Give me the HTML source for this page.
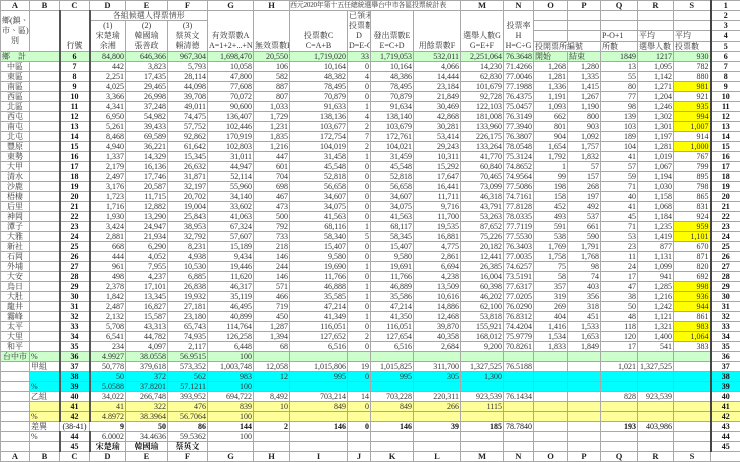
<!DOCTYPE html>
<html><head><meta charset="utf-8"><style>
body{margin:0;background:#fff;width:740px;height:459px;overflow:hidden}
table{border-collapse:collapse;table-layout:fixed;width:740px;font-family:"Liberation Serif","Noto Serif CJK TC","Noto Serif CJK SC",serif;font-size:8px;color:#333}
td{border:1px solid #a8a8a8;height:9px;line-height:9px;padding:0 1px;text-align:right;white-space:nowrap;overflow:hidden}
tr{height:10px}
.l{text-align:center;font-weight:bold;font-size:8.5px;color:#222}
.c{text-align:center}
.lt{text-align:left}
.rc{text-align:center;font-weight:bold;border-left:2px solid #444;border-right:1px solid #444;color:#111}
.cc{text-align:center;font-weight:bold;border-left:2px solid #555;border-right:2px solid #555;color:#111}
.h{vertical-align:bottom;text-align:center;line-height:10px;border-top:none;border-bottom:none}
.g td{background:#ccffcc}
.cy td{background:#00ffff}
.yl td{background:#ffff99}
td.y{background:#ffff00}
td.w{background:#fff}
.b{font-weight:bold;color:#111}
.t{text-align:left;font-size:7px;letter-spacing:-0.2px;padding:0;overflow:visible}
</style></head><body>
<table>
<colgroup><col style="width:29px"><col style="width:30px"><col style="width:30px"><col style="width:36px"><col style="width:42px"><col style="width:40px"><col style="width:46px"><col style="width:36px"><col style="width:58px"><col style="width:23px"><col style="width:43px"><col style="width:47px"><col style="width:43px"><col style="width:30px"><col style="width:34px"><col style="width:33px"><col style="width:37px"><col style="width:36px"><col style="width:37px"><col style="width:30px"></colgroup>
<tr><td class="l">A</td><td class="l">B</td><td class="l">C</td><td class="l">D</td><td class="l">E</td><td class="l">F</td><td class="l">G</td><td class="l">H</td><td colspan="4" class="t">西元2020年第十五任總統選舉台中市各區投票統計表</td><td class="l">M</td><td class="l">N</td><td class="l">O</td><td class="l">P</td><td class="l">Q</td><td class="l">R</td><td class="l">S</td><td class="rc">1</td></tr>
<tr><td rowspan="4" class="h" style="vertical-align:middle">鄉(鎮、<br>市、區)<br>別</td><td rowspan="4" class="h"></td><td rowspan="4" class="h cc" style="font-weight:normal">行號</td><td colspan="3" class="c">各組候選人得票情形</td><td rowspan="4" class="h">有效票數A<br>A=1+2+...+N</td><td rowspan="4" class="h">無效票數B</td><td rowspan="4" class="h">投票數C<br>C=A+B</td><td rowspan="4" class="h">已領未<br>投票數<br>D<br>D=E-C</td><td rowspan="4" class="h">發出票數E<br>E=C+D</td><td rowspan="4" class="h">用餘票數F</td><td rowspan="4" class="h">選舉人數G<br>G=E+F</td><td rowspan="4" class="h">投票率<br>H<br>H=C÷G</td><td></td><td></td><td></td><td></td><td></td><td class="rc">2</td></tr>
<tr><td rowspan="3" class="h">(1)<br>宋楚瑜<br>余湘</td><td rowspan="3" class="h">(2)<br>韓國瑜<br>張善政</td><td rowspan="3" class="h">(3)<br>蔡英文<br>賴清德</td><td></td><td></td><td></td><td></td><td></td><td class="rc">3</td></tr>
<tr><td></td><td></td><td class="lt">P-O+1</td><td class="lt">平均</td><td class="lt">平均</td><td class="rc">4</td></tr>
<tr><td colspan="2" class="lt">投開票所編號</td><td class="lt">所數</td><td class="lt">選舉人數</td><td class="lt">投票數</td><td class="rc">5</td></tr>
<tr class="g"><td colspan="2" class="lt">鄉　計</td><td class="cc">6</td><td>84,800</td><td>646,366</td><td>967,304</td><td>1,698,470</td><td>20,550</td><td>1,719,020</td><td>33</td><td>1,719,053</td><td>532,011</td><td>2,251,064</td><td>76.3648</td><td class="lt">開始</td><td class="lt">結束</td><td>1849</td><td>1217</td><td>930</td><td class="rc w">6</td></tr>
<tr><td class="c">中區</td><td></td><td class="cc">7</td><td>442</td><td>3,823</td><td>5,793</td><td>10,058</td><td>106</td><td>10,164</td><td>0</td><td>10,164</td><td>4,066</td><td>14,230</td><td>71.4266</td><td>1,268</td><td>1,280</td><td>13</td><td>1,095</td><td>782</td><td class="rc">7</td></tr>
<tr><td class="c">東區</td><td></td><td class="cc">8</td><td>2,251</td><td>17,435</td><td>28,114</td><td>47,800</td><td>582</td><td>48,382</td><td>4</td><td>48,386</td><td>14,444</td><td>62,830</td><td>77.0046</td><td>1,281</td><td>1,335</td><td>55</td><td>1,142</td><td>880</td><td class="rc">8</td></tr>
<tr><td class="c">南區</td><td></td><td class="cc">9</td><td>4,025</td><td>29,465</td><td>44,098</td><td>77,608</td><td>887</td><td>78,495</td><td>0</td><td>78,495</td><td>23,184</td><td>101,679</td><td>77.1988</td><td>1,336</td><td>1,415</td><td>80</td><td>1,271</td><td class="y">981</td><td class="rc">9</td></tr>
<tr><td class="c">西區</td><td></td><td class="cc">10</td><td>3,366</td><td>26,998</td><td>39,708</td><td>70,072</td><td>807</td><td>70,879</td><td>0</td><td>70,879</td><td>21,849</td><td>92,728</td><td>76.4375</td><td>1,191</td><td>1,267</td><td>77</td><td>1,204</td><td>921</td><td class="rc">10</td></tr>
<tr><td class="c">北區</td><td></td><td class="cc">11</td><td>4,341</td><td>37,248</td><td>49,011</td><td>90,600</td><td>1,033</td><td>91,633</td><td>1</td><td>91,634</td><td>30,469</td><td>122,103</td><td>75.0457</td><td>1,093</td><td>1,190</td><td>98</td><td>1,246</td><td class="y">935</td><td class="rc">11</td></tr>
<tr><td class="c">西屯</td><td></td><td class="cc">12</td><td>6,950</td><td>54,982</td><td>74,475</td><td>136,407</td><td>1,729</td><td>138,136</td><td>4</td><td>138,140</td><td>42,868</td><td>181,008</td><td>76.3149</td><td>662</td><td>800</td><td>139</td><td>1,302</td><td class="y">994</td><td class="rc">12</td></tr>
<tr><td class="c">南屯</td><td></td><td class="cc">13</td><td>5,261</td><td>39,433</td><td>57,752</td><td>102,446</td><td>1,231</td><td>103,677</td><td>2</td><td>103,679</td><td>30,281</td><td>133,960</td><td>77.3940</td><td>801</td><td>903</td><td>103</td><td>1,301</td><td class="y">1,007</td><td class="rc">13</td></tr>
<tr><td class="c">北屯</td><td></td><td class="cc">14</td><td>8,468</td><td>69,589</td><td>92,862</td><td>170,919</td><td>1,835</td><td>172,754</td><td>7</td><td>172,761</td><td>53,414</td><td>226,175</td><td>76.3807</td><td>904</td><td>1,092</td><td>189</td><td>1,197</td><td>914</td><td class="rc">14</td></tr>
<tr><td class="c">豐原</td><td></td><td class="cc">15</td><td>4,940</td><td>36,221</td><td>61,642</td><td>102,803</td><td>1,216</td><td>104,019</td><td>2</td><td>104,021</td><td>29,243</td><td>133,264</td><td>78.0548</td><td>1,654</td><td>1,757</td><td>104</td><td>1,281</td><td class="y">1,000</td><td class="rc">15</td></tr>
<tr><td class="c">東勢</td><td></td><td class="cc">16</td><td>1,337</td><td>14,329</td><td>15,345</td><td>31,011</td><td>447</td><td>31,458</td><td>1</td><td>31,459</td><td>10,311</td><td>41,770</td><td>75.3124</td><td>1,792</td><td>1,832</td><td>41</td><td>1,019</td><td>767</td><td class="rc">16</td></tr>
<tr><td class="c">大甲</td><td></td><td class="cc">17</td><td>2,179</td><td>16,136</td><td>26,632</td><td>44,947</td><td>601</td><td>45,548</td><td>0</td><td>45,548</td><td>15,292</td><td>60,840</td><td>74.8652</td><td>1</td><td>57</td><td>57</td><td>1,067</td><td>799</td><td class="rc">17</td></tr>
<tr><td class="c">清水</td><td></td><td class="cc">18</td><td>2,497</td><td>17,746</td><td>31,871</td><td>52,114</td><td>704</td><td>52,818</td><td>0</td><td>52,818</td><td>17,647</td><td>70,465</td><td>74.9564</td><td>99</td><td>157</td><td>59</td><td>1,194</td><td>895</td><td class="rc">18</td></tr>
<tr><td class="c">沙鹿</td><td></td><td class="cc">19</td><td>3,176</td><td>20,587</td><td>32,197</td><td>55,960</td><td>698</td><td>56,658</td><td>0</td><td>56,658</td><td>16,441</td><td>73,099</td><td>77.5086</td><td>198</td><td>268</td><td>71</td><td>1,030</td><td>798</td><td class="rc">19</td></tr>
<tr><td class="c">梧棲</td><td></td><td class="cc">20</td><td>1,723</td><td>11,715</td><td>20,702</td><td>34,140</td><td>467</td><td>34,607</td><td>0</td><td>34,607</td><td>11,711</td><td>46,318</td><td>74.7161</td><td>158</td><td>197</td><td>40</td><td>1,158</td><td>865</td><td class="rc">20</td></tr>
<tr><td class="c">后里</td><td></td><td class="cc">21</td><td>1,716</td><td>12,882</td><td>19,004</td><td>33,602</td><td>473</td><td>34,075</td><td>0</td><td>34,075</td><td>9,716</td><td>43,791</td><td>77.8128</td><td>452</td><td>492</td><td>41</td><td>1,068</td><td>831</td><td class="rc">21</td></tr>
<tr><td class="c">神岡</td><td></td><td class="cc">22</td><td>1,930</td><td>13,290</td><td>25,843</td><td>41,063</td><td>500</td><td>41,563</td><td>0</td><td>41,563</td><td>11,700</td><td>53,263</td><td>78.0335</td><td>493</td><td>537</td><td>45</td><td>1,184</td><td>924</td><td class="rc">22</td></tr>
<tr><td class="c">潭子</td><td></td><td class="cc">23</td><td>3,424</td><td>24,947</td><td>38,953</td><td>67,324</td><td>792</td><td>68,116</td><td>1</td><td>68,117</td><td>19,535</td><td>87,652</td><td>77.7119</td><td>591</td><td>661</td><td>71</td><td>1,235</td><td class="y">959</td><td class="rc">23</td></tr>
<tr><td class="c">大雅</td><td></td><td class="cc">24</td><td>2,881</td><td>21,934</td><td>32,792</td><td>57,607</td><td>733</td><td>58,340</td><td>5</td><td>58,345</td><td>16,881</td><td>75,226</td><td>77.5530</td><td>538</td><td>590</td><td>53</td><td>1,419</td><td class="y">1,101</td><td class="rc">24</td></tr>
<tr><td class="c">新社</td><td></td><td class="cc">25</td><td>668</td><td>6,290</td><td>8,231</td><td>15,189</td><td>218</td><td>15,407</td><td>0</td><td>15,407</td><td>4,775</td><td>20,182</td><td>76.3403</td><td>1,769</td><td>1,791</td><td>23</td><td>877</td><td>670</td><td class="rc">25</td></tr>
<tr><td class="c">石岡</td><td></td><td class="cc">26</td><td>444</td><td>4,052</td><td>4,938</td><td>9,434</td><td>146</td><td>9,580</td><td>0</td><td>9,580</td><td>2,861</td><td>12,441</td><td>77.0035</td><td>1,758</td><td>1,768</td><td>11</td><td>1,131</td><td>871</td><td class="rc">26</td></tr>
<tr><td class="c">外埔</td><td></td><td class="cc">27</td><td>961</td><td>7,955</td><td>10,530</td><td>19,446</td><td>244</td><td>19,690</td><td>1</td><td>19,691</td><td>6,694</td><td>26,385</td><td>74.6257</td><td>75</td><td>98</td><td>24</td><td>1,099</td><td>820</td><td class="rc">27</td></tr>
<tr><td class="c">大安</td><td></td><td class="cc">28</td><td>498</td><td>4,237</td><td>6,885</td><td>11,620</td><td>146</td><td>11,766</td><td>0</td><td>11,766</td><td>4,238</td><td>16,004</td><td>73.5191</td><td>58</td><td>74</td><td>17</td><td>941</td><td>692</td><td class="rc">28</td></tr>
<tr><td class="c">烏日</td><td></td><td class="cc">29</td><td>2,378</td><td>17,101</td><td>26,838</td><td>46,317</td><td>571</td><td>46,888</td><td>1</td><td>46,889</td><td>13,509</td><td>60,398</td><td>77.6317</td><td>357</td><td>403</td><td>47</td><td>1,285</td><td class="y">998</td><td class="rc">29</td></tr>
<tr><td class="c">大肚</td><td></td><td class="cc">30</td><td>1,842</td><td>13,345</td><td>19,932</td><td>35,119</td><td>466</td><td>35,585</td><td>1</td><td>35,586</td><td>10,616</td><td>46,202</td><td>77.0205</td><td>319</td><td>356</td><td>38</td><td>1,216</td><td class="y">936</td><td class="rc">30</td></tr>
<tr><td class="c">龍井</td><td></td><td class="cc">31</td><td>2,487</td><td>16,827</td><td>27,181</td><td>46,495</td><td>719</td><td>47,214</td><td>0</td><td>47,214</td><td>14,886</td><td>62,100</td><td>76.0290</td><td>269</td><td>318</td><td>50</td><td>1,242</td><td class="y">944</td><td class="rc">31</td></tr>
<tr><td class="c">霧峰</td><td></td><td class="cc">32</td><td>2,132</td><td>15,587</td><td>23,180</td><td>40,899</td><td>450</td><td>41,349</td><td>1</td><td>41,350</td><td>12,468</td><td>53,818</td><td>76.8312</td><td>404</td><td>451</td><td>48</td><td>1,121</td><td>861</td><td class="rc">32</td></tr>
<tr><td class="c">太平</td><td></td><td class="cc">33</td><td>5,708</td><td>43,313</td><td>65,743</td><td>114,764</td><td>1,287</td><td>116,051</td><td>0</td><td>116,051</td><td>39,870</td><td>155,921</td><td>74.4204</td><td>1,416</td><td>1,533</td><td>118</td><td>1,321</td><td class="y">983</td><td class="rc">33</td></tr>
<tr><td class="c">大里</td><td></td><td class="cc">34</td><td>6,541</td><td>44,782</td><td>74,935</td><td>126,258</td><td>1,394</td><td>127,652</td><td>2</td><td>127,654</td><td>40,358</td><td>168,012</td><td>75.9779</td><td>1,534</td><td>1,653</td><td>120</td><td>1,400</td><td class="y">1,064</td><td class="rc">34</td></tr>
<tr><td class="c">和平</td><td></td><td class="cc">35</td><td>234</td><td>4,097</td><td>2,117</td><td>6,448</td><td>68</td><td>6,516</td><td>0</td><td>6,516</td><td>2,684</td><td>9,200</td><td>70.8261</td><td>1,833</td><td>1,849</td><td>17</td><td>541</td><td>383</td><td class="rc">35</td></tr>
<tr class="g"><td class="c">台中市</td><td class="lt">%</td><td class="cc">36</td><td>4.9927</td><td>38.0558</td><td>56.9515</td><td>100</td><td></td><td></td><td></td><td></td><td></td><td></td><td></td><td></td><td></td><td></td><td></td><td></td><td class="rc w">36</td></tr>
<tr><td></td><td class="lt">甲組</td><td class="cc">37</td><td>50,778</td><td>379,618</td><td>573,352</td><td>1,003,748</td><td>12,058</td><td>1,015,806</td><td>19</td><td>1,015,825</td><td>311,700</td><td>1,327,525</td><td>76.5188</td><td></td><td></td><td>1,021</td><td>1,327,525</td><td></td><td class="rc">37</td></tr>
<tr class="cy"><td class="w"></td><td></td><td class="cc">38</td><td>50</td><td>372</td><td>562</td><td>983</td><td>12</td><td>995</td><td>0</td><td>995</td><td>305</td><td>1,300</td><td></td><td></td><td></td><td></td><td></td><td></td><td class="rc">38</td></tr>
<tr class="cy"><td class="w"></td><td class="lt">%</td><td class="cc">39</td><td>5.0588</td><td>37.8201</td><td>57.1211</td><td>100</td><td></td><td></td><td></td><td></td><td></td><td></td><td></td><td></td><td></td><td></td><td></td><td></td><td class="rc">39</td></tr>
<tr><td></td><td class="lt">乙組</td><td class="cc">40</td><td>34,022</td><td>266,748</td><td>393,952</td><td>694,722</td><td>8,492</td><td>703,214</td><td>14</td><td>703,228</td><td>220,311</td><td>923,539</td><td>76.1434</td><td></td><td></td><td>828</td><td>923,539</td><td></td><td class="rc">40</td></tr>
<tr class="yl"><td class="w"></td><td></td><td class="cc">41</td><td>41</td><td>322</td><td>476</td><td>839</td><td>10</td><td>849</td><td>0</td><td>849</td><td>266</td><td>1115</td><td></td><td></td><td></td><td></td><td></td><td></td><td class="rc">41</td></tr>
<tr class="yl"><td class="w"></td><td class="lt">%</td><td class="cc">42</td><td>4.8972</td><td>38.3964</td><td>56.7064</td><td>100</td><td></td><td></td><td></td><td></td><td></td><td></td><td></td><td></td><td></td><td></td><td></td><td></td><td class="rc">42</td></tr>
<tr class="b"><td></td><td class="lt" style="font-weight:normal">差異</td><td class="c" style="font-weight:normal">(38-41)</td><td>9</td><td>50</td><td>86</td><td>144</td><td>2</td><td>146</td><td>0</td><td>146</td><td>39</td><td>185</td><td style="font-weight:normal">78.7840</td><td></td><td></td><td>193</td><td style="font-weight:normal">403,986</td><td></td><td class="rc">43</td></tr>
<tr><td></td><td class="lt">%</td><td class="cc">44</td><td>6.0002</td><td>34.4636</td><td>59.5362</td><td>100</td><td></td><td></td><td></td><td></td><td></td><td></td><td></td><td></td><td></td><td></td><td></td><td></td><td class="rc">44</td></tr>
<tr><td></td><td></td><td class="cc">45</td><td class="c b">宋楚瑜</td><td class="c b">韓國瑜</td><td class="c b">蔡英文</td><td></td><td></td><td></td><td></td><td></td><td></td><td></td><td></td><td></td><td></td><td></td><td></td><td></td><td class="rc">45</td></tr>
<tr><td class="l">A</td><td class="l">B</td><td class="l">C</td><td class="l">D</td><td class="l">E</td><td class="l">F</td><td class="l">G</td><td class="l">H</td><td class="l">I</td><td class="l">J</td><td class="l">K</td><td class="l">L</td><td class="l">M</td><td class="l">N</td><td class="l">O</td><td class="l">P</td><td class="l">Q</td><td class="l">R</td><td class="l">S</td><td></td></tr>
</table>
</body></html>
